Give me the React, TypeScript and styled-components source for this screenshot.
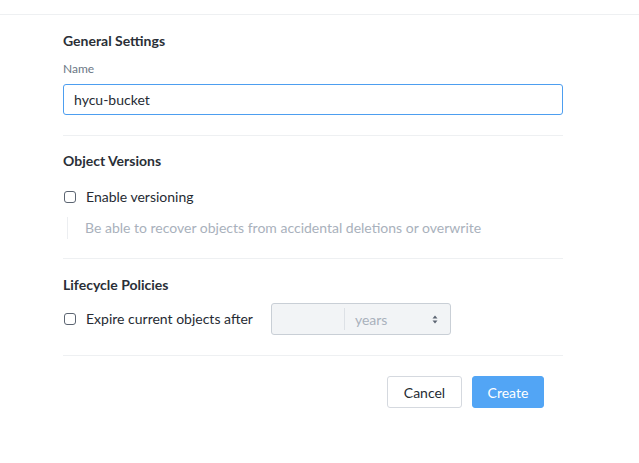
import React from "react";
import styled, { createGlobalStyle } from "styled-components";

const Global = createGlobalStyle`
  html, body { margin: 0; padding: 0; background: #ffffff; }
  body { font-family: Lato, "Open Sans", sans-serif; color: #262b33; }
  * { box-sizing: border-box; }
`;

const TopBar = styled.div`
  height: 15px;
  border-bottom: 1px solid #eef0f2;
`;

const Form = styled.div`
  width: 500px;
  margin-left: 63px;
  padding-top: 18px;
`;

const Section = styled.section<{ $top?: number }>`
  display: flex;
  flex-direction: column;
  margin-top: ${(p) => p.$top ?? 0}px;
`;

const Heading = styled.h3`
  margin: 0;
  font-size: 14px;
  line-height: 16px;
  font-weight: 700;
  color: #2a2f37;
`;

const Label = styled.label`
  margin-top: 13px;
  font-size: 12px;
  line-height: 14px;
  color: #6b7785;
`;

const TextInput = styled.input`
  margin-top: 8px;
  height: 31px;
  width: 100%;
  border: 1px solid #4d9ef0;
  border-radius: 3px;
  padding: 0 10px;
  font-family: inherit;
  font-size: 14px;
  color: #262b33;
  outline: none;
`;

const Divider = styled.hr<{ $top: number }>`
  margin: ${(p) => p.$top}px 0 0 0;
  border: 0;
  border-top: 1px solid #eef0f2;
  height: 0;
`;

const Row = styled.div<{ $top: number }>`
  margin-top: ${(p) => p.$top}px;
  display: flex;
  align-items: center;
`;

const Check = styled.span`
  width: 12px;
  height: 12px;
  margin-left: 1px;
  border: 1px solid #5c6572;
  border-radius: 3px;
  flex: none;
`;

const CheckLabel = styled.span`
  margin-left: 10px;
  font-size: 14px;
  line-height: 18px;
  color: #262b33;
`;

const Description = styled.div`
  margin-top: 11px;
  margin-left: 4px;
  border-left: 1px solid #eceef1;
  padding-left: 17px;
  font-size: 14px;
  line-height: 22px;
  color: #a9b1bc;
`;

const SelectBox = styled.div`
  margin-left: 18px;
  width: 180px;
  height: 32px;
  background: #f2f4f6;
  border: 1px solid #c9cfd6;
  border-radius: 3px;
  display: flex;
  align-items: center;
`;

const NumberPart = styled.div`
  width: 73px;
  height: 22px;
  border-right: 1px solid #dde1e6;
`;

const UnitPart = styled.div`
  flex: 1;
  display: flex;
  align-items: center;
  justify-content: space-between;
  padding: 0 12px 0 10px;
  font-size: 14px;
  color: #a9b1bc;
`;

const Actions = styled.div`
  margin-top: 20px;
  display: flex;
  justify-content: flex-end;
  gap: 10px;
  padding-right: 19px;
`;

const Button = styled.button<{ $primary?: boolean }>`
  height: 32px;
  min-width: ${(p) => (p.$primary ? 72 : 75)}px;
  padding: 0 14px;
  border-radius: 3px;
  font-family: inherit;
  font-size: 14px;
  border: 1px solid ${(p) => (p.$primary ? "#52a5f5" : "#d5d9df")};
  background: ${(p) => (p.$primary ? "#52a5f5" : "#ffffff")};
  color: ${(p) => (p.$primary ? "#ffffff" : "#262b33")};
`;

const Arrows = () => (
  <svg width="6" height="9" viewBox="0 0 6 9">
    <path d="M3 0.5 L5.5 3.5 H0.5 Z" fill="#5c6572" />
    <path d="M3 8.5 L5.5 5.5 H0.5 Z" fill="#5c6572" />
  </svg>
);

export default function App() {
  return (
    <>
      <Global />
      <TopBar />
      <Form>
        <Section>
          <Heading>General Settings</Heading>
          <Label>Name</Label>
          <TextInput defaultValue="hycu-bucket" />
        </Section>
        <Divider $top={20} />
        <Section $top={17}>
          <Heading>Object Versions</Heading>
          <Row $top={19}>
            <Check />
            <CheckLabel>Enable versioning</CheckLabel>
          </Row>
          <Description>Be able to recover objects from accidental deletions or overwrite</Description>
        </Section>
        <Divider $top={19} />
        <Section $top={18}>
          <Heading>Lifecycle Policies</Heading>
          <Row $top={10}>
            <Check />
            <CheckLabel>Expire current objects after</CheckLabel>
            <SelectBox>
              <NumberPart />
              <UnitPart>
                years
                <Arrows />
              </UnitPart>
            </SelectBox>
          </Row>
        </Section>
        <Divider $top={20} />
        <Actions>
          <Button>Cancel</Button>
          <Button $primary>Create</Button>
        </Actions>
      </Form>
    </>
  );
}
